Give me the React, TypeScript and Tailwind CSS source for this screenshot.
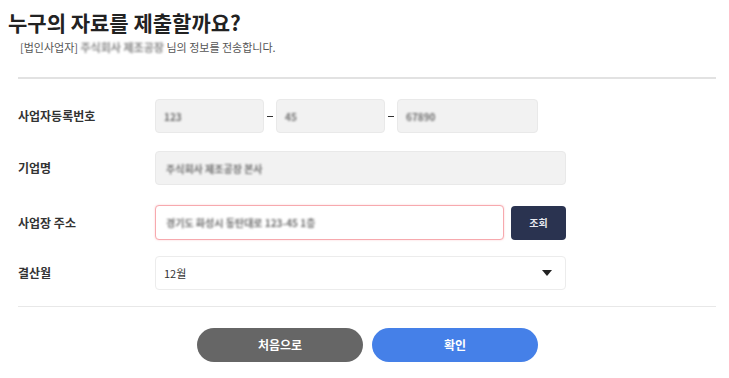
import React from "react";

const font = { fontFamily: '"Noto Sans CJK KR", "Noto Sans", sans-serif' };

function Blur({ children, w }: { children: React.ReactNode; w: string }) {
  return (
    <span className={`inline-block blur-[1px] text-[#6f6f6f] font-bold ${w} overflow-hidden whitespace-nowrap align-middle`}>
      {children}
    </span>
  );
}

export default function App() {
  return (
    <div className="w-[729px] h-[378px] bg-white overflow-hidden" style={font}>
      <div className="pl-[8px] pt-[8px] text-[21px] font-bold leading-[28px] text-[#222]">누구의 자료를 제출할까요?</div>
      <div className="pl-[20px] mt-[3px] text-[11px] leading-[16px] text-[#555] flex items-center">
        <span>[법인사업자]&nbsp;</span>
        <span className="blur-[1px] text-[#8a8a8a] font-bold whitespace-nowrap">주식회사 제조공장</span>
        <span>&nbsp;님의 정보를 전송합니다.</span>
      </div>
      <div className="ml-[18px] w-[698px] h-[2px] bg-[#e2e2e2] mt-[22px]" />

      <div className="ml-[18px] mt-[20px] flex flex-col">
        <div className="flex items-center h-[34px]">
          <div className="w-[137px] text-[12px] font-bold text-[#333]">사업자등록번호</div>
          <div className="w-[109px] h-[34px] rounded-[4px] bg-[#f2f2f2] border border-[#e9e9e9] flex items-center px-[8px] text-[10px]">
            <Blur w="w-[20px]">123</Blur>
          </div>
          <div className="w-[12px] flex justify-center"><div className="w-[6px] h-[1px] bg-[#333]" /></div>
          <div className="w-[109px] h-[34px] rounded-[4px] bg-[#f2f2f2] border border-[#e9e9e9] flex items-center px-[8px] text-[10px]">
            <Blur w="w-[12px]">45</Blur>
          </div>
          <div className="w-[12px] flex justify-center"><div className="w-[6px] h-[1px] bg-[#333]" /></div>
          <div className="w-[141px] h-[34px] rounded-[4px] bg-[#f2f2f2] border border-[#e9e9e9] flex items-center px-[8px] text-[10px]">
            <Blur w="w-[34px]">67890</Blur>
          </div>
        </div>

        <div className="flex items-center h-[34px] mt-[18px]">
          <div className="w-[137px] text-[12px] font-bold text-[#333]">기업명</div>
          <div className="w-[411px] h-[34px] rounded-[4px] bg-[#f2f2f2] border border-[#e9e9e9] flex items-center px-[10px] text-[10px]">
            <Blur w="w-[105px]">주식회사 제조공장 본사</Blur>
          </div>
        </div>

        <div className="flex items-center h-[35px] mt-[20px]">
          <div className="w-[137px] text-[12px] font-bold text-[#333]">사업장 주소</div>
          <div className="w-[349px] h-[35px] rounded-[4px] bg-white border border-[#f7a9ae] shadow-[0_0_2px_rgba(247,169,174,0.6)] flex items-center px-[10px] text-[10px]">
            <Blur w="w-[175px]">경기도 화성시 동탄대로 123-45 1층</Blur>
          </div>
          <div className="ml-[7px] w-[55px] h-[34px] rounded-[4px] bg-[#2a3350] flex items-center justify-center text-[10px] font-bold text-[#e8eaf0]">조회</div>
        </div>

        <div className="flex items-center h-[34px] mt-[16px]">
          <div className="w-[137px] text-[12px] font-bold text-[#333]">결산월</div>
          <div className="w-[411px] h-[34px] rounded-[4px] bg-white border border-[#ececec] flex items-center justify-between pl-[8px] pr-[13px] text-[11px] text-[#333]">
            <span>12월</span>
            <svg width="10" height="6" viewBox="0 0 10 6"><path d="M0 0 L10 0 L5 6 Z" fill="#222" /></svg>
          </div>
        </div>
      </div>

      <div className="ml-[18px] w-[698px] h-[1px] bg-[#e8e8e8] mt-[16px]" />

      <div className="mt-[21px] flex justify-center gap-[9px] pl-[6px]">
        <div className="w-[166px] h-[34px] rounded-full bg-[#666666] flex items-center justify-center text-[12px] font-bold text-white">처음으로</div>
        <div className="w-[166px] h-[34px] rounded-full bg-[#4580e8] flex items-center justify-center text-[12px] font-bold text-white">확인</div>
      </div>
    </div>
  );
}
